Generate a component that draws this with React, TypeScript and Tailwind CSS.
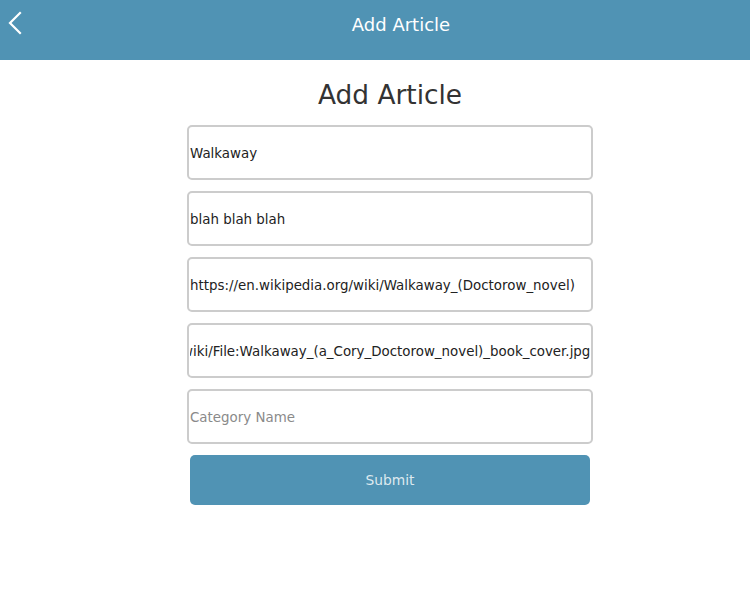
import { useEffect, useRef } from "react";

const font = { fontFamily: '"DejaVu Sans", sans-serif' };

function Field({ value, placeholder, scrollEnd }: { value?: string; placeholder?: string; scrollEnd?: boolean }) {
  const ref = useRef<HTMLInputElement>(null);
  useEffect(() => {
    if (scrollEnd && ref.current) ref.current.scrollLeft = ref.current.scrollWidth;
  }, [scrollEnd]);
  return (
    <input
      ref={ref}
      defaultValue={value}
      placeholder={placeholder}
      className="w-[406px] h-[55px] px-px pt-[2px] border-2 border-[#cccccc] rounded-[5px] bg-white text-[13.4px] text-[#222] placeholder:text-[#8a8a8a] outline-none"
      style={font}
    />
  );
}

export default function App() {
  return (
    <div className="min-h-[592px] bg-white" style={font}>
      <header className="relative h-[60px] bg-[#5093b4] flex items-center justify-center">
        <button className="absolute left-[4px] top-[11px] w-6 h-6 flex items-center justify-center">
          <svg width="16" height="24" viewBox="0 0 16 24" fill="none">
            <path d="M12 2 L2 12 L12 22" stroke="white" strokeWidth="2.2" strokeLinecap="square" />
          </svg>
        </button>
        <h1 className="text-white text-[18px] mt-[-11px] ml-[52px]">Add Article</h1>
      </header>

      <main className="flex flex-col items-center pl-[30px]">
        <h2 className="text-[#333] text-[26.4px] mt-[18px] leading-[34px]">Add Article</h2>
        <form className="mt-[13px] flex flex-col items-center gap-[11px]" onSubmit={(e) => e.preventDefault()}>
          <Field value="Walkaway" />
          <Field value="blah blah blah" />
          <Field value="https://en.wikipedia.org/wiki/Walkaway_(Doctorow_novel)" />
          <Field value="https://en.wikipedia.org/wiki/File:Walkaway_(a_Cory_Doctorow_novel)_book_cover.jpg" scrollEnd />
          <Field placeholder="Category Name" />
          <button
            type="submit"
            className="w-[400px] h-[50px] rounded-[5px] bg-[#5093b4] text-[#dde9ef] text-[13.8px]"
          >
            Submit
          </button>
        </form>
      </main>
    </div>
  );
}
